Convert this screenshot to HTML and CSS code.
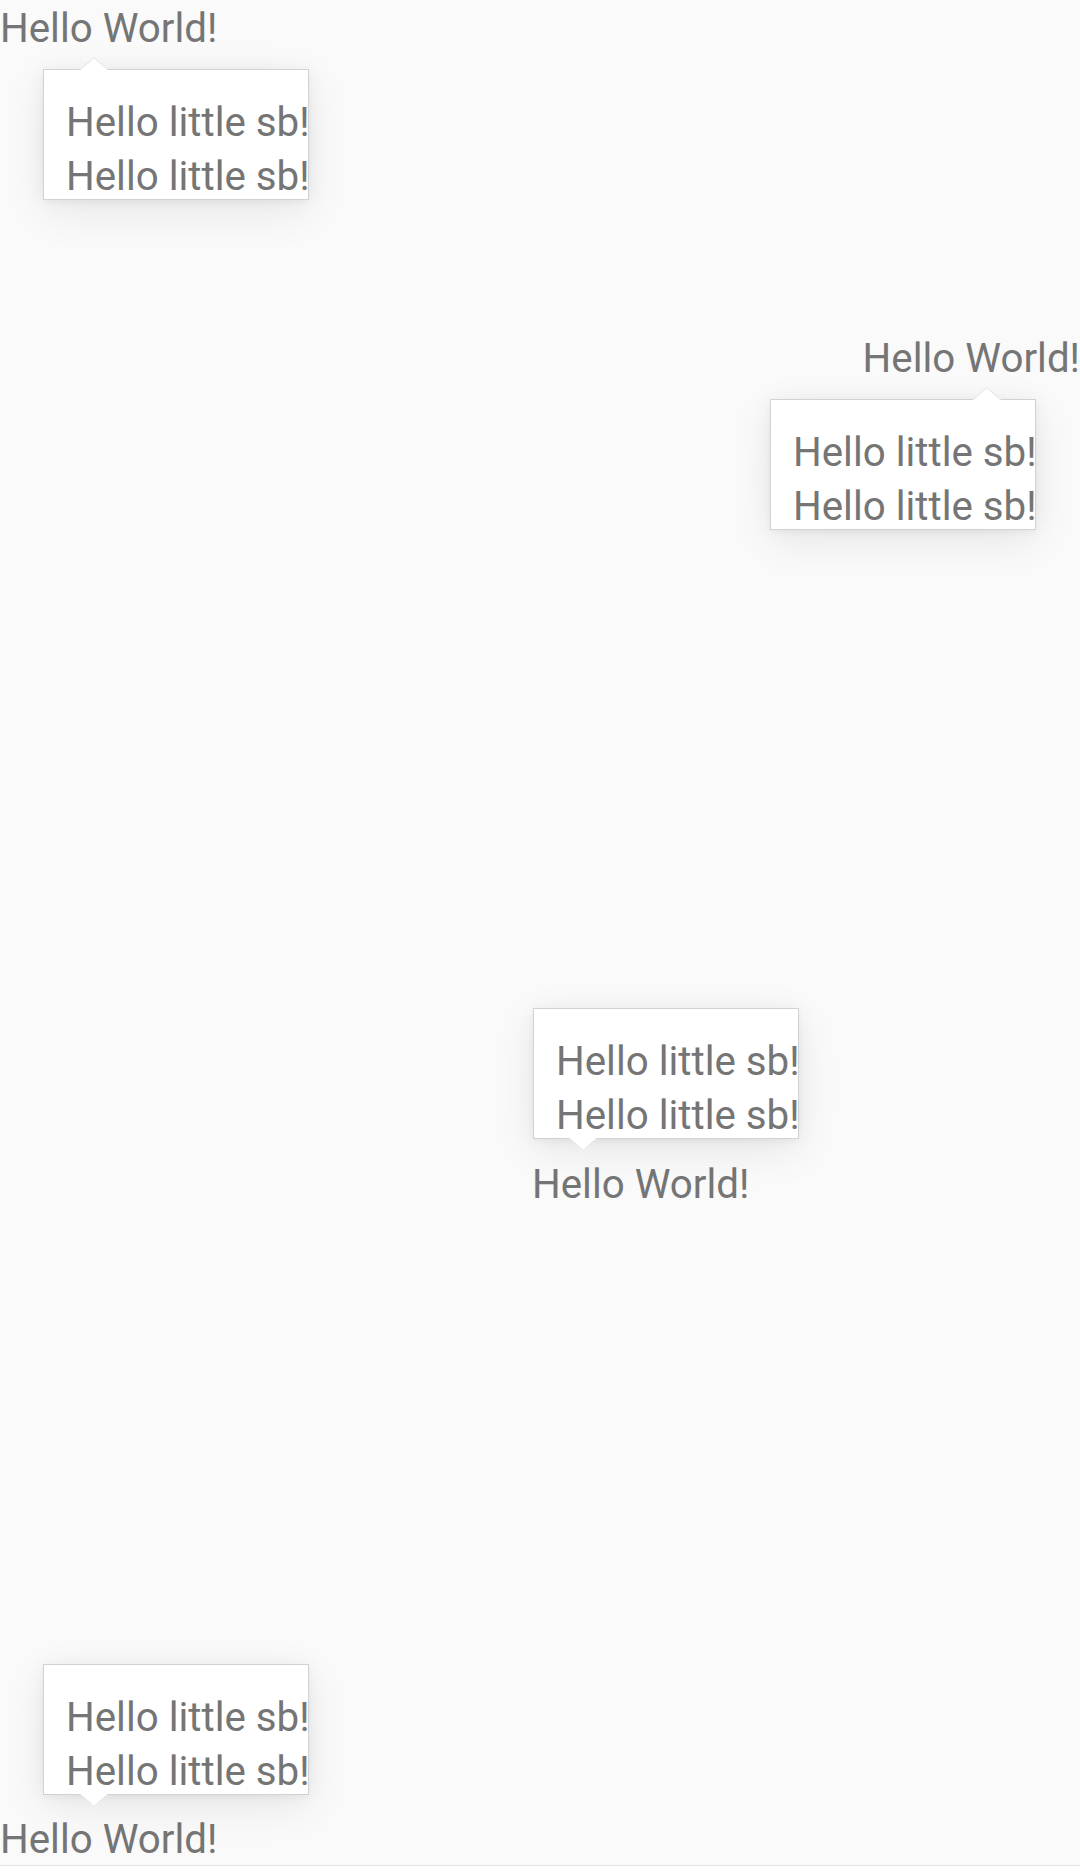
FILE: index.html
```html
<!DOCTYPE html>
<html>
<head>
<meta charset="utf-8">
<link rel="stylesheet" href="styles.css">
</head>
<body>
<main class="stage">
  <div class="anchor anchor-1">Hello World!
    <div class="tip tip-1">
      <svg class="arrow arrow-up" viewBox="0 0 28 13" width="28" height="13"><polygon points="0,13 14,0 28,13" fill="#fff"/><polyline points="0.5,12.6 14,0.8 27.5,12.6" fill="none" stroke="#e2e2e2" stroke-width="1"/></svg>
      <div class="tip-box"><div class="tip-line">Hello little sb!</div><div class="tip-line">Hello little sb!</div></div>
    </div>
  </div>
  <div class="anchor anchor-2">Hello World!
    <div class="tip tip-2">
      <svg class="arrow arrow-up" viewBox="0 0 28 13" width="28" height="13"><polygon points="0,13 14,0 28,13" fill="#fff"/><polyline points="0.5,12.6 14,0.8 27.5,12.6" fill="none" stroke="#e2e2e2" stroke-width="1"/></svg>
      <div class="tip-box"><div class="tip-line">Hello little sb!</div><div class="tip-line">Hello little sb!</div></div>
    </div>
  </div>
  <div class="anchor anchor-3">Hello World!
    <div class="tip tip-3">
      <div class="tip-box"><div class="tip-line">Hello little sb!</div><div class="tip-line">Hello little sb!</div></div>
      <svg class="arrow arrow-down" viewBox="0 0 28 13" width="28" height="13"><polygon points="0,0 14,13 28,0" fill="#fff"/><polyline points="0.5,0.4 14,12.2 27.5,0.4" fill="none" stroke="#e2e2e2" stroke-width="1"/></svg>
    </div>
  </div>
  <div class="anchor anchor-4">Hello World!
    <div class="tip tip-4">
      <div class="tip-box"><div class="tip-line">Hello little sb!</div><div class="tip-line">Hello little sb!</div></div>
      <svg class="arrow arrow-down" viewBox="0 0 28 13" width="28" height="13"><polygon points="0,0 14,13 28,0" fill="#fff"/><polyline points="0.5,0.4 14,12.2 27.5,0.4" fill="none" stroke="#e2e2e2" stroke-width="1"/></svg>
    </div>
  </div>
</main>
</body>
</html>
```
FILE: styles.css
```css
html {
  background: #ffffff;
}
body {
  margin: 0;
  font-family: Roboto, "Liberation Sans", sans-serif;
  color: #757575;
}
.stage {
  display: flex;
  flex-direction: column;
  height: 1865px;
  background: #fafafa;
  border-bottom: 1px solid #e2e2e2;
  overflow: hidden;
}
.anchor {
  position: relative;
  padding-top: 1px;
  font-size: 40.3px;
  line-height: 54px;
  white-space: nowrap;
  align-self: flex-start;
}
.anchor-1 { margin-top: 1px; }
.anchor-2 { margin-top: 275px; align-self: flex-end; }
.anchor-3 { margin-top: 771px; margin-left: 532px; }
.anchor-4 { margin-top: 600px; }

.tip {
  position: absolute;
  width: 266px;
  z-index: 1;
}
.tip-1 { left: 43px; top: 68px; }
.tip-2 { right: 44px; top: 68px; }
.tip-3 { left: 1px; top: -149px; }
.tip-4 { left: 43px; top: -148px; }

.tip-box {
  box-sizing: border-box;
  width: 266px;
  height: 131px;
  padding: 26px 0 0 22px;
  background: #ffffff;
  border: 1px solid #d2d2d2;
  box-shadow: 0 12px 44px rgba(0, 0, 0, 0.08), 0 0 20px rgba(0, 0, 0, 0.035), 0 2px 6px rgba(0, 0, 0, 0.04);
  overflow: hidden;
}
.tip-line {
  font-size: 40.3px;
  line-height: 54px;
  white-space: nowrap;
}
.arrow {
  position: absolute;
  display: block;
  z-index: 2;
}
.arrow-up { top: -12px; }
.arrow-down { top: 130px; }
.tip-1 .arrow, .tip-4 .arrow { left: 37px; }
.tip-2 .arrow { left: 203px; }
.tip-3 .arrow { left: 36px; }
```
